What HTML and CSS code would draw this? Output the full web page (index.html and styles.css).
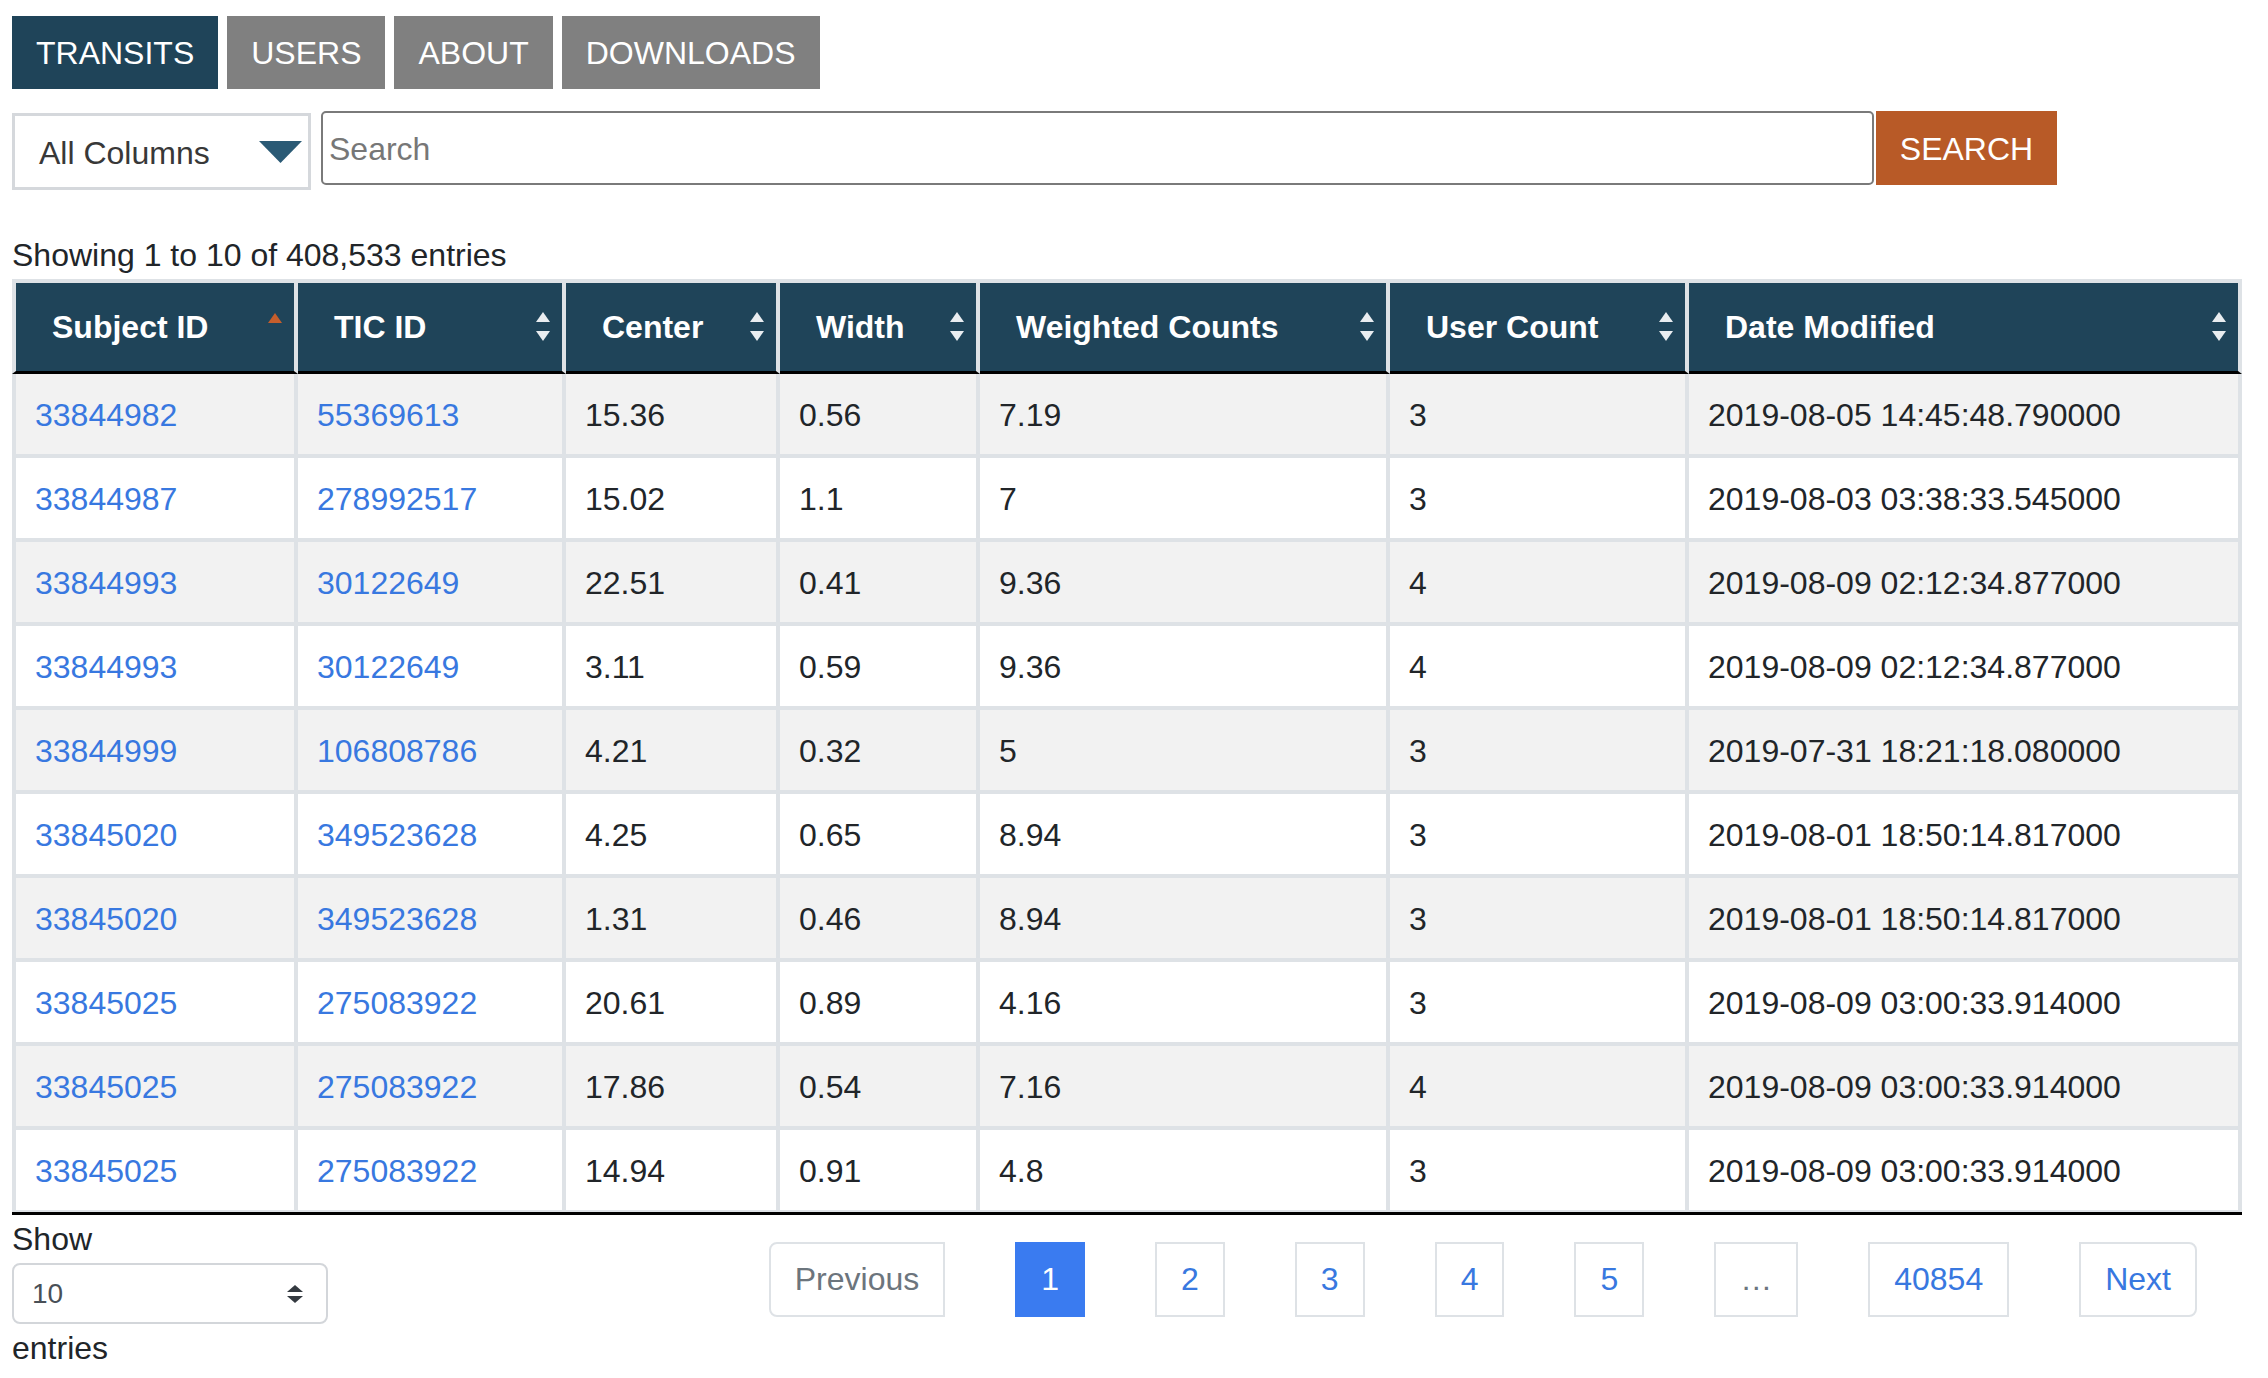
FILE: index.html
```html
<!DOCTYPE html>
<html>
<head>
<meta charset="utf-8">
<title>Transits</title>
<link rel="stylesheet" href="styles.css">
</head>
<body>
<div class="page">
  <nav class="nav">
    <a class="nav-btn active">TRANSITS</a>
    <a class="nav-btn">USERS</a>
    <a class="nav-btn">ABOUT</a>
    <a class="nav-btn">DOWNLOADS</a>
  </nav>

  <div class="toolbar">
    <div class="col-select">
      <span>All Columns</span>
      <svg class="col-caret" width="43" height="22" viewBox="0 0 43 22"><polygon points="0,0 43,0 21.5,22" fill="#2a5a75"/></svg>
    </div>
    <input class="search-input" type="text" placeholder="Search">
    <button class="search-btn">SEARCH</button>
  </div>

  <div class="info">Showing 1 to 10 of 408,533 entries</div>

  <table class="grid">
    <thead>
      <tr>
        <th class="w1"><div class="th-in"><span>Subject ID</span><svg class="sort" width="14" height="30" viewBox="0 0 14 30"><polygon points="0,11 7,1 14,11" fill="#c55e2c"/></svg></div></th>
        <th class="w2"><div class="th-in"><span>TIC ID</span><svg class="sort" width="14" height="30" viewBox="0 0 14 30"><polygon points="0,10 7,0 14,10" fill="#e9edf0"/><polygon points="0,19 7,29 14,19" fill="#e9edf0"/></svg></div></th>
        <th class="w3"><div class="th-in"><span>Center</span><svg class="sort" width="14" height="30" viewBox="0 0 14 30"><polygon points="0,10 7,0 14,10" fill="#e9edf0"/><polygon points="0,19 7,29 14,19" fill="#e9edf0"/></svg></div></th>
        <th class="w4"><div class="th-in"><span>Width</span><svg class="sort" width="14" height="30" viewBox="0 0 14 30"><polygon points="0,10 7,0 14,10" fill="#e9edf0"/><polygon points="0,19 7,29 14,19" fill="#e9edf0"/></svg></div></th>
        <th class="w5"><div class="th-in"><span>Weighted Counts</span><svg class="sort" width="14" height="30" viewBox="0 0 14 30"><polygon points="0,10 7,0 14,10" fill="#e9edf0"/><polygon points="0,19 7,29 14,19" fill="#e9edf0"/></svg></div></th>
        <th class="w6"><div class="th-in"><span>User Count</span><svg class="sort" width="14" height="30" viewBox="0 0 14 30"><polygon points="0,10 7,0 14,10" fill="#e9edf0"/><polygon points="0,19 7,29 14,19" fill="#e9edf0"/></svg></div></th>
        <th class="w7"><div class="th-in"><span>Date Modified</span><svg class="sort" width="14" height="30" viewBox="0 0 14 30"><polygon points="0,10 7,0 14,10" fill="#e9edf0"/><polygon points="0,19 7,29 14,19" fill="#e9edf0"/></svg></div></th>
      </tr>
    </thead>
    <tbody>
      <tr><td><a class="lnk">33844982</a></td><td><a class="lnk">55369613</a></td><td>15.36</td><td>0.56</td><td>7.19</td><td>3</td><td>2019-08-05 14:45:48.790000</td></tr>
      <tr><td><a class="lnk">33844987</a></td><td><a class="lnk">278992517</a></td><td>15.02</td><td>1.1</td><td>7</td><td>3</td><td>2019-08-03 03:38:33.545000</td></tr>
      <tr><td><a class="lnk">33844993</a></td><td><a class="lnk">30122649</a></td><td>22.51</td><td>0.41</td><td>9.36</td><td>4</td><td>2019-08-09 02:12:34.877000</td></tr>
      <tr><td><a class="lnk">33844993</a></td><td><a class="lnk">30122649</a></td><td>3.11</td><td>0.59</td><td>9.36</td><td>4</td><td>2019-08-09 02:12:34.877000</td></tr>
      <tr><td><a class="lnk">33844999</a></td><td><a class="lnk">106808786</a></td><td>4.21</td><td>0.32</td><td>5</td><td>3</td><td>2019-07-31 18:21:18.080000</td></tr>
      <tr><td><a class="lnk">33845020</a></td><td><a class="lnk">349523628</a></td><td>4.25</td><td>0.65</td><td>8.94</td><td>3</td><td>2019-08-01 18:50:14.817000</td></tr>
      <tr><td><a class="lnk">33845020</a></td><td><a class="lnk">349523628</a></td><td>1.31</td><td>0.46</td><td>8.94</td><td>3</td><td>2019-08-01 18:50:14.817000</td></tr>
      <tr><td><a class="lnk">33845025</a></td><td><a class="lnk">275083922</a></td><td>20.61</td><td>0.89</td><td>4.16</td><td>3</td><td>2019-08-09 03:00:33.914000</td></tr>
      <tr><td><a class="lnk">33845025</a></td><td><a class="lnk">275083922</a></td><td>17.86</td><td>0.54</td><td>7.16</td><td>4</td><td>2019-08-09 03:00:33.914000</td></tr>
      <tr><td><a class="lnk">33845025</a></td><td><a class="lnk">275083922</a></td><td>14.94</td><td>0.91</td><td>4.8</td><td>3</td><td>2019-08-09 03:00:33.914000</td></tr>
    </tbody>
  </table>

  <div class="footer">
    <div class="length">
      <div class="lbl">Show</div>
      <div class="len-select">
        <span>10</span>
        <svg width="16" height="18" viewBox="0 0 16 18"><polygon points="0,7 8,0 16,7" fill="#343a40"/><polygon points="0,11 8,18 16,11" fill="#343a40"/></svg>
      </div>
      <div class="lbl">entries</div>
    </div>
    <ul class="pager">
      <li class="pg first muted">Previous</li>
      <li class="pg current">1</li>
      <li class="pg">2</li>
      <li class="pg">3</li>
      <li class="pg">4</li>
      <li class="pg">5</li>
      <li class="pg muted">…</li>
      <li class="pg">40854</li>
      <li class="pg last">Next</li>
    </ul>
  </div>
</div>
</body>
</html>
```
FILE: styles.css
```css
* { box-sizing: border-box; }
html, body { margin: 0; padding: 0; background: #fff; }
body {
  font-family: "Liberation Sans", Arial, Helvetica, sans-serif;
  font-size: 32px;
  line-height: 48px;
  color: #212529;
}
.page {
  padding: 16px 26px 0 12px;
  width: 2268px;
}
.nav {
  display: flex;
  gap: 9px;
}
.nav-btn {
  display: block;
  height: 73px;
  line-height: 75px;
  padding: 0 24px;
  background: #808080;
  color: #fff;
  font-size: 32px;
}
.nav-btn.active { background: #1f4459; }

.toolbar {
  display: flex;
  align-items: flex-start;
  margin-top: 22px;
}
.col-select {
  margin-top: 2px;
  width: 299px;
  height: 77px;
  border: 3px solid #d5d8dc;
  background: #fff;
  display: flex;
  align-items: center;
  justify-content: space-between;
  padding: 0 6px 0 24px;
  color: #383838;
}
.col-select span { margin-top: 2px; }
.search-input {
  margin-left: 10px;
  width: 1553px;
  height: 74px;
  border: 2px solid #7a7a7a;
  border-radius: 5px;
  padding: 2px 6px 0;
  font-family: "Liberation Sans", Arial, sans-serif;
  font-size: 32px;
  color: #212529;
  outline: none;
}
.search-input::placeholder { color: #777; }
.search-btn {
  margin-left: 2px;
  width: 181px;
  height: 74px;
  border: 0;
  background: #b85a27;
  color: #fff;
  font-family: "Liberation Sans", Arial, sans-serif;
  font-size: 32px;
  padding: 2px 0 0;
}

.info {
  margin-top: 41px;
  height: 48px;
}

.grid {
  width: 2230px;
  table-layout: fixed;
  border-collapse: separate;
  border-spacing: 0;
  border-bottom: 3px solid #000;
}
.grid th, .grid td {
  border-right: 4px solid #dee2e6;
  text-align: left;
  white-space: nowrap;
}
.grid th:first-child, .grid td:first-child { border-left: 4px solid #dee2e6; }
.grid th {
  background: #1f4459;
  color: #fff;
  font-weight: bold;
  padding: 20px 12px 20px 36px;
  border-top: 4px solid #dee2e6;
  border-bottom: 3px solid #000;
}
.th-in {
  display: flex;
  align-items: center;
  justify-content: space-between;
  height: 48px;
}
.sort { flex: none; display: block; }
.w1 { width: 286px; }
.w2 { width: 268px; }
.w3 { width: 214px; }
.w4 { width: 200px; }
.w5 { width: 410px; }
.w6 { width: 299px; }
.w7 { width: 553px; }
.grid td {
  padding: 17px 12px 15px 19px;
  border-bottom: 4px solid #dee2e6;
  background: #fff;
}
.grid tbody tr:nth-child(odd) td { background: #f2f2f2; }
.grid tbody tr:last-child td { border-bottom-width: 2px; }
.lnk { color: #3878e0; text-decoration: none; }

.footer {
  display: flex;
  align-items: flex-start;
}
.length { width: 316px; }
.len-select {
  width: 316px;
  height: 61px;
  border: 2px solid #d3d6da;
  border-radius: 8px;
  display: flex;
  align-items: center;
  justify-content: space-between;
  padding: 0 23px 0 18px;
  font-size: 28px;
  color: #495057;
}
.pager {
  list-style: none;
  margin: 27px 45px 0 auto;
  padding: 0;
  display: flex;
  gap: 70px;
}
.pg {
  height: 75px;
  line-height: 71px;
  padding: 0 24px;
  border: 2px solid #dee2e6;
  color: #3878e0;
  font-size: 32px;
  background: #fff;
}
.pg.muted { color: #6c757d; }
.pg.first { border-radius: 8px 0 0 8px; padding: 0 24px; }
.pg.last { border-radius: 0 8px 8px 0; }
.pg.current { background: #3a7bf0; border-color: #3a7bf0; color: #fff; }
```
